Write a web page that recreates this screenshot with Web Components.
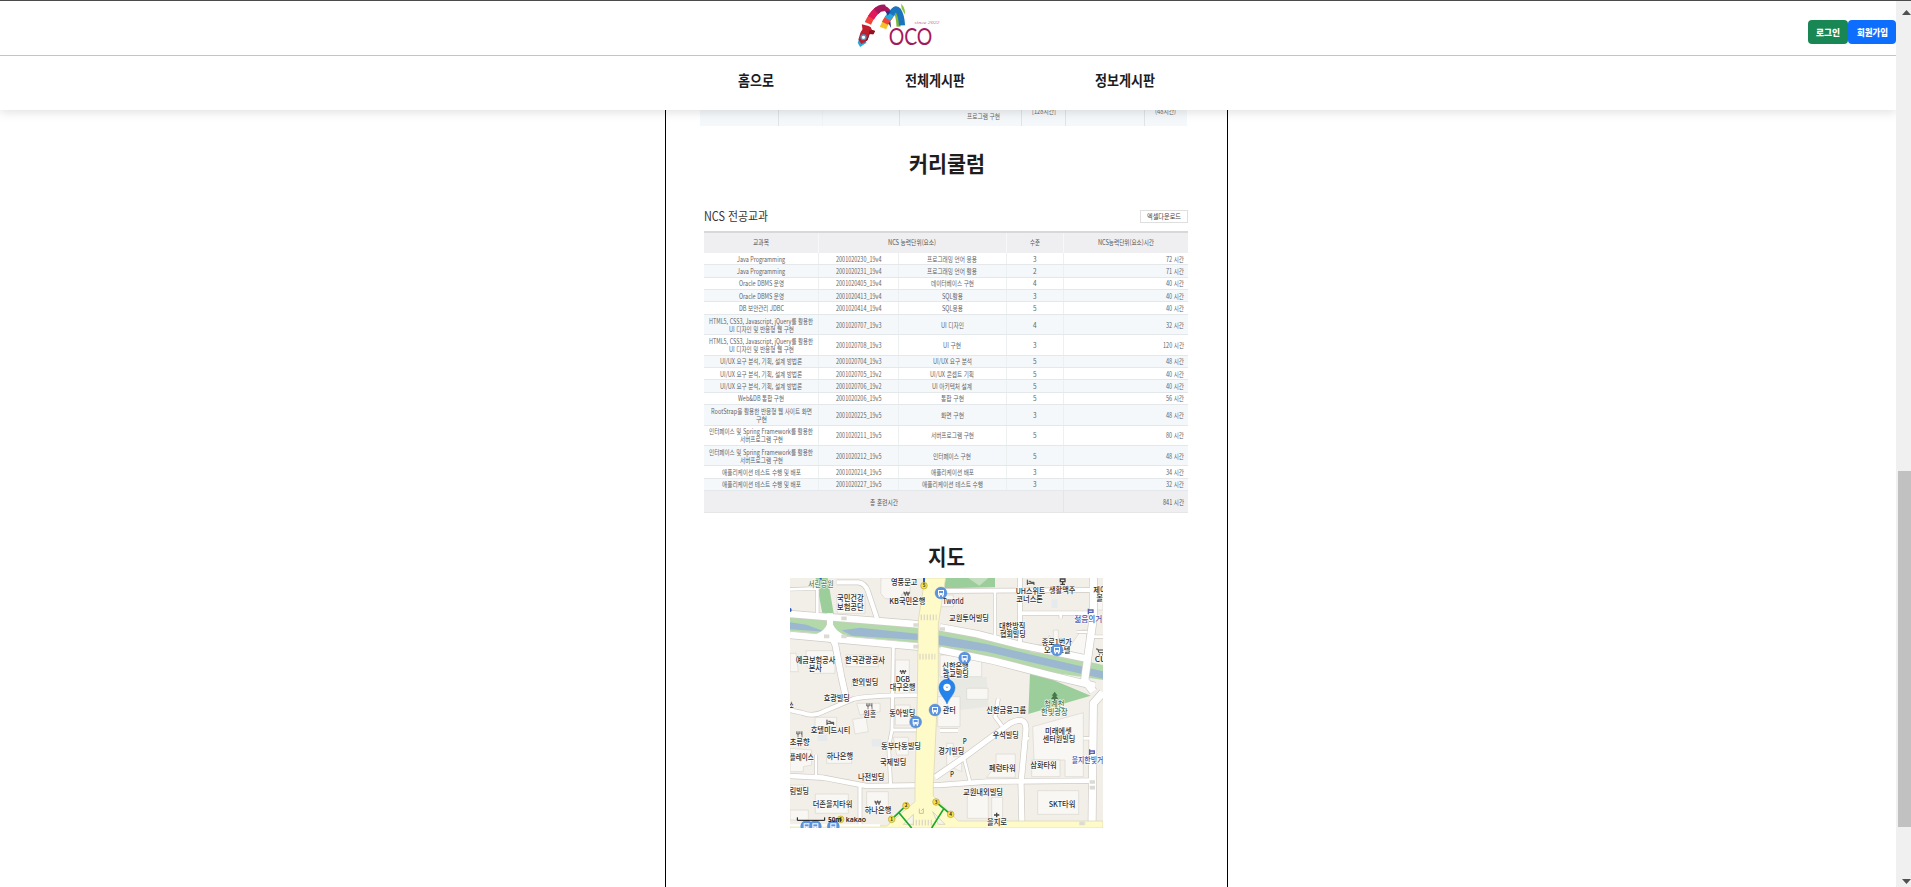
<!DOCTYPE html>
<html lang="ko">
<head>
<meta charset="utf-8">
<title>MOCO</title>
<style>
html,body{margin:0;height:100%;overflow:hidden;background:#fff;color:#222}
body{font-family:"Noto Sans CJK KR","Noto Sans",sans-serif}
</style>
</head>
<body>
<moco-app></moco-app>
<script>
/* Text squeezed or stretched to a set width; w = width, s = font size, h = line height */
class FitText extends HTMLElement{
  connectedCallback(){
    const w=+this.getAttribute('w'),s=+this.getAttribute('s'),h=+(this.getAttribute('h')||Math.ceil(s*1.2));
    const wt=this.getAttribute('wt')||400;
    this.attachShadow({mode:'open'}).innerHTML=`<style>:host{display:block;flex:none;width:${w}px;height:${h}px}svg{display:block;overflow:visible}</style>
    <svg width="${w}" height="${h}"><text x="0" y="${h/2+s*0.37}" font-size="${s}" font-weight="${wt}" fill="currentColor" textLength="${w}" lengthAdjust="spacingAndGlyphs"></text></svg>`;
    this.shadowRoot.querySelector('text').textContent=this.getAttribute('t');
  }
}
customElements.define('fit-text',FitText);

class MocoLogo extends HTMLElement{
  constructor(){super();this.attachShadow({mode:'open'}).innerHTML=`
<style>:host{display:block;width:88px;height:50px}svg{display:block}</style>
<svg width="88" height="50" viewBox="0 0 258 150" preserveAspectRatio="none">
<g fill="none" stroke-width="20">
<path d="M108 22Q120 42 122 80" stroke="#7db733" stroke-width="12"/>
<path d="M32 70Q44 43 60 30" stroke="#f0433a"/>
<path d="M41 53Q50 38 62 29" stroke="#e2185f"/>
<path d="M56 34Q68 22 82 24" stroke="#a3195b"/>
<path d="M74 23Q88 24 96 42" stroke="#a3195b" stroke-width="14"/>
<path d="M76 84Q84 62 100 44" stroke="#f5c22b"/>
<path d="M82 70Q88 58 98 46" stroke="#f0433a"/>
<path d="M89 57Q96 46 106 37" stroke="#27a8e0"/>
<path d="M100 43Q112 20 121 32Q130 46 132 76" stroke="#1c75bc" stroke-width="18"/>
</g>
<path d="M84 33l15 1-9 13zM92 70l8 14-2-20z" fill="#27358b"/>
<path d="M129 11Q142 22 141 44L131 26z" fill="#8cc63f"/>
<path d="M10 108L2 128 9 141 28 128z" fill="#27a8e0"/>
<path d="M14 73L34 78Q42 80 44 90L53 93 48 103 37 102 31 120 13 132 4 119 10 98 16 88z" fill="#be1e2d"/>
<path d="M44 90L53 93 48 103 37 102 31 120 17 131Q36 112 36 92z" fill="#8f1322"/>
<circle cx="19" cy="112" r="7" fill="#fff" stroke="#27a8e0" stroke-width="4"/>
<text x="93" y="136" font-family="Lato" font-size="69" fill="#a3195b" textLength="128" lengthAdjust="spacingAndGlyphs">OCO</text>
<text x="168" y="71" font-family="Liberation Serif" font-style="italic" font-size="15" fill="#bd6c94" textLength="74" lengthAdjust="spacingAndGlyphs">since 2022</text>
</svg>`}
}
customElements.define('moco-logo',MocoLogo);

class MocoButton extends HTMLElement{
  constructor(){super();this.attachShadow({mode:'open'}).innerHTML=`<style>:host{display:flex;align-items:center;justify-content:center;height:24px;border-radius:4px;color:#fff;background:var(--bg)}</style><slot></slot>`}
}
customElements.define('moco-button',MocoButton);

class MocoHeader extends HTMLElement{
  constructor(){super();this.attachShadow({mode:'open'}).innerHTML=`
<style>
:host{display:block;position:relative;z-index:2;background:#fff;box-shadow:0 2px 10px rgba(0,0,0,.13);height:110px;box-sizing:border-box;border-top:1px solid #4b4b4b}
.top{display:flex;height:54px;border-bottom:1px solid #c4c4c4;justify-content:space-between}
moco-logo{margin:-1px 0 0 857px}
.btns{display:flex;margin-top:19px}
.btns moco-button:first-child{width:40px;--bg:#198754}
.btns moco-button:last-child{width:48px;--bg:#0d6efd}
nav{display:flex;gap:130.5px;padding:14px 0 0 738px;color:#1d1d1f}
</style>
<div class="top"><moco-logo></moco-logo><div class="btns">
<moco-button><fit-text t="로그인" w="24" s="9.5" wt="900"></fit-text></moco-button><moco-button><fit-text t="회원가입" w="31" s="9.5" wt="900"></fit-text></moco-button></div></div>
<nav><fit-text t="홈으로" w="36" s="15" h="20" wt="700"></fit-text><fit-text t="전체게시판" w="60" s="15" h="20" wt="700"></fit-text><fit-text t="정보게시판" w="60" s="15" h="20" wt="700"></fit-text></nav>`}
}
customElements.define('moco-header',MocoHeader);

/* Last row of the training summary table, partly under the header */
class SummaryTail extends HTMLElement{
  constructor(){super();this.attachShadow({mode:'open'}).innerHTML=`
<style>
:host{display:grid;grid-template-columns:79px 44px 77px 122px 44px 79px 42px;width:487px;height:16px;background:#f4f8fb;color:#666;overflow:hidden}
div{border-right:1px solid #e1e4e7;box-sizing:border-box;height:16px;display:flex}
div:nth-child(3){border-color:#eff3f6}div:last-child{border:0}
</style><div></div><div></div><div></div>
<div style="padding:2px 0 0 67px"><fit-text t="프로그램 구현" w="33" s="6.8" h="9"></fit-text></div>
<div style="padding-left:10px"><fit-text t="[128시간]" w="24" s="7.2" h="3"></fit-text></div><div></div>
<div style="padding-left:10px"><fit-text t="(48시간)" w="21" s="7.2" h="3"></fit-text></div>`}
}
customElements.define('summary-tail',SummaryTail);

const ROWS=[
[12.4,[['Java Programming',48]],'2001020230_19v4',['프로그래밍 언어 응용',50],'3','72 시간'],
[12.4,[['Java Programming',48]],'2001020231_19v4',['프로그래밍 언어 활용',50],'2','71 시간'],
[12.4,[['Oracle DBMS 운영',45]],'2001020405_19v4',['데이터베이스 구현',43],'4','40 시간'],
[12.4,[['Oracle DBMS 운영',45]],'2001020413_19v4',['SQL활용',21],'3','40 시간'],
[12.4,[['DB 보안관리 JDBC',45]],'2001020414_19v4',['SQL응용',21],'5','40 시간'],
[20.4,[['HTML5, CSS3, Javascript, jQuery를 활용한',104],['UI 디자인 및 반응형 웹 구현',65]],'2001020707_19v3',['UI 디자인',23],'4','32 시간'],
[20.4,[['HTML5, CSS3, Javascript, jQuery를 활용한',104],['UI 디자인 및 반응형 웹 구현',65]],'2001020708_19v3',['UI 구현',18],'3','120 시간'],
[12.4,[['UI/UX 요구 분석, 기획, 설계 방법론',82]],'2001020704_19v3',['UI/UX 요구 분석',39],'5','48 시간'],
[12.4,[['UI/UX 요구 분석, 기획, 설계 방법론',82]],'2001020705_19v2',['UI/UX 콘셉트 기획',44],'5','40 시간'],
[12.4,[['UI/UX 요구 분석, 기획, 설계 방법론',82]],'2001020706_19v2',['UI 아키텍처 설계',40],'5','40 시간'],
[12.4,[['Web&DB 통합 구현',46]],'2001020206_19v5',['통합 구현',23],'5','56 시간'],
[20.4,[['RootStrap을 활용한 반응형 웹 사이트 화면',101],['구현',11]],'2001020225_19v5',['화면 구현',23],'3','48 시간'],
[20.4,[['인터페이스 및 Spring Framework를 활용한',104],['서버프로그램 구현',43]],'2001020211_19v5',['서버프로그램 구현',43],'5','80 시간'],
[20.4,[['인터페이스 및 Spring Framework를 활용한',104],['서버프로그램 구현',43]],'2001020212_19v5',['인터페이스 구현',38],'5','48 시간'],
[12.4,[['애플리케이션 테스트 수행 및 배포',79]],'2001020214_19v5',['애플리케이션 배포',43],'3','34 시간'],
[12.4,[['애플리케이션 테스트 수행 및 배포',79]],'2001020227_19v5',['애플리케이션 테스트 수행',61],'3','32 시간']];
class CurriculumTable extends HTMLElement{
  constructor(){super();
    const f=(t,w,s=7.2)=>`<fit-text t="${t.replace('&','&amp;')}" w="${w}" s="${s}" h="8"></fit-text>`;
    const hw=t=>t.length>5?21:18;
    this.attachShadow({mode:'open'}).innerHTML=`
<style>
:host{display:block;width:484px;color:#626466}
.bar{display:flex;justify-content:space-between;align-items:center;height:14px;margin-bottom:7.5px;color:#333}
.dl{display:flex;align-items:center;justify-content:center;width:48px;height:13px;box-sizing:border-box;border:1px solid #dfdfdf;color:#444}
.r{display:grid;grid-template-columns:115.3px 80px 108px 57.4px 1fr;box-sizing:border-box;border-bottom:1px solid #e4e8ea}
.r>div{display:flex;flex-direction:column;align-items:center;justify-content:center;border-right:1px solid #edf0f1}
.r>div:first-child{padding-left:1px}
.r>div:last-child{border:0;align-items:flex-end;padding-right:4px}
.r.h{height:22.4px;background:#efeff1;border-top:2px solid #d7d8d9;border-bottom:0;color:#555}
.r.h>div{border-color:#f7f7f8;padding-bottom:2px}
.r.h>div:last-child{align-items:center;padding:0 0 2px 1px}
.r.f{height:22px;background:#efeff1;border-bottom:1px solid #e6e6e8;color:#555}
.r.f>div{border-color:#e5e5e8}
</style>
<div class="bar"><fit-text t="NCS 전공교과" w="64" s="12.5" h="14"></fit-text><div class="dl">${f('엑셀다운로드',34)}</div></div>
<section><div class="r h"><div>${f('교과목',16)}</div><div style="grid-column:span 2">${f('NCS 능력단위(요소)',48)}</div><div>${f('수준',10)}</div><div>${f('NCS능력단위(요소)시간',56)}</div></div>
${ROWS.map((r,i)=>`<div class="r" style="height:${r[0]}px;background:${i%2?'#f4f8fb':'#fff'}"><div>${r[1].map(x=>f(...x)).join('')}</div><div>${f(r[2],45.5)}</div><div>${f(...r[3])}</div><div>${f(r[4],3.6)}</div><div>${f(r[5],hw(r[5]))}</div></div>`).join('')}
<div class="r f"><div style="grid-column:span 4">${f('총 훈련시간',28)}</div><div>${f('841 시간',21)}</div></div></section>`;
  }
}
customElements.define('curriculum-table',CurriculumTable);

/* Map; drawn in thirds of a pixel */
class KakaoMap extends HTMLElement{
  constructor(){super();
  const roads=[
  [8,'M30 178L112 175V250'],[13,'M170 157H235Q256 160 264 184L292 268'],[9,'M340 350L336 600M336 600H415M336 600L326 650L332 765'],
  [12,'M25 540L65 548Q100 562 130 545L220 507Q270 495 415 496'],[18,'M150 250V310L166 345L184 440L198 502'],
  [14,'M30 738L130 743L260 768L480 765L620 755L930 752'],[10,'M240 768V894'],[7,'M108 675V742'],
  [16,'M465 742L555 680L690 580Q738 556 738 598L723 760L726 894'],[10,'M655 505L645 560L666 588'],[8,'M552 685L570 755'],
  [10,'M480 602H534'],[12,'M480 183L930 180'],[8,'M645 183V325'],[12,'M720 144V345M720 250H930'],[8,'M842 250V265M890 306H922M936 320H969M735 625H748M910 625H935'],
  [20,'M30 252L415 283M480 292L590 312L720 345L915 385M30 315L415 350M480 360L640 392L810 436L945 468'],
  [22,'M940 144V262L914 450L940 485M969 487L940 520L936 894']];
  const bl=['M303 144H390V192H365V206H315L302 190Z','M30 370H48L55 425H30Z','M78 362H165V430H100L78 405Z','M170 196H255V250H172Z','M198 375H295V410H198Z','M218 446L290 448 292 468 215 470Z','M346 390H388V500H346Z','M346 525H390V585H346Z','M230 520H300V545L240 555Z','M218 568L258 562 265 605 225 612Z','M105 562H170V590H105Z','M30 655L95 660V705L70 710V725H30Z','M140 668H215V700H140Z','M340 622H385V675H350Z','M260 785H325V845H260Z','M30 765H70V795H30ZM106 792H205V850H106ZM30 840H85V870H30Z','M480 375H605V440H480Z','M473 500H540V590H473Z','M560 475H624V508H560Z','M500 640H520V680H545V725L500 705Z','M648 672H706V742H620L648 706Z','M758 590L910 548V740H855V690H762Z','M755 690H840V740H755Z','M773 782H896V853H773Z','M562 795H625V865H562ZM635 802H668V865H635Z','M752 348L800 340 808 315 820 340V300H835V345L860 350 865 380 752 365Z','M905 300H920V375L860 362Z','M480 195H520V230H480Z','M942 180H969V240H942Z'];
  const L=[['서린공원',84,162,77,'#5b7f5b'],['국민건강',171,206,80],['보험공단',171,232,80],['영풍문고',333,156,79],['KB국민은행',328,214,108],['예금보험공사',47,390,119],['본사',86,414,40],['한국관광공사',195,390,120],['DGB',347,447,43],['대구은행',329,472,77],['한외빌딩',216,457,79],['효광빌딩',131,505,78],['원흥',250,553,39],['동아빌딩',328,551,78],['호텔미드시티',92,602,119],['초류향',29,638,60],['플레이스',29,683,72],['하나은행',140,679,79],['동부다동빌딩',303,649,120],['국제빌딩',300,697,79],['나전빌딩',234,742,79],['림빌딩',29,784,58],['더존을지타워',98,822,119],['하나은행',254,841,80],
  ['Tworld',488,213,63],['교원투어빌딩',507,265,120],['대한방직',657,288,79],['협회빌딩',660,312,77],['UH스위트',707,183,89],['생활맥주',807,181,79],['코너스톤',709,207,80],['제이',940,180,40],['볼',949,204,20],['젊음의거',883,268,84,'#4a50a5'],['종로1번가',785,337,90],['오피스텔',792,361,79],['CU',944,389,34],['신한은행',487,409,79],['광교빌딩',488,434,78],
  ['관터',488,541,39],['신한금융그룹',619,542,119],['우석빌딩',638,617,78],['경기빌딩',475,665,78],['페럼타워',627,716,80],['삼화타워',751,707,79],['교원내외빌딩',549,787,120],['을지로',621,877,60],['미래에셋',795,603,80],['센터원빌딩',788,627,98],['SKT타워',806,822,80],['청계천',793,523,60,'#49774c'],['한빛광장',783,547,80,'#49774c'],['을지한빛거',875,691,95,'#4a50a5'],['P',548,634,12],['P',510,734,12],['소',28,527,13]];
  const bus=(x,y)=>`<g transform="translate(${x} ${y})"><circle r="18" fill="#5d93dd" stroke="#3f7fce" stroke-width="1"/><path d="M-9-9H9V7H-9ZM-7 7h4v4h-4zM3 7h4v4h-4z" fill="#fff"/><path d="M-6-6H6V0H-6Z" fill="#5d93dd"/><path d="M-6 3h3M3 3h3" stroke="#5d93dd" stroke-width="2"/></g>`;
  const ex=(x,y,n)=>`<circle cx="${x}" cy="${y}" r="10" fill="#f7e04a" stroke="#a18e24" stroke-width="1.5"/><text x="${x-4}" y="${y+5}" font-size="14" font-weight="700">${n}</text>`;
  const fork=(x,y)=>`<path transform="translate(${x} ${y})" d="M-8-8V0M-4-8V0M0-8V0M-8 0H0M-4 0V10M8-8V10M5-8V0H8" stroke="#444" stroke-width="2" fill="none"/>`;
  const bed=(x,y)=>`<path transform="translate(${x} ${y})" d="M-10-8V8M-10 3H10V8M-6-3H0V0H10V3" stroke="#444" stroke-width="3" fill="none"/>`;
  const won=(x,y)=>`<path transform="translate(${x} ${y})" d="M-8-6L-4 6 0-6 4 6 8-6M-10-2H10" stroke="#444" stroke-width="2.5" fill="none"/>`;
  this.attachShadow({mode:'open'}).innerHTML=`
<style>:host{display:block;width:313px;height:250px}svg{display:block}</style>
<svg width="313" height="250" viewBox="30 144 939 750" fill="none">
<rect x="30" y="144" width="939" height="750" fill="#f2efe9"/>
<path d="M480 440L620 440 625 530 540 540 480 500Z" fill="#e9e9e4"/>
<g fill="#9bce9a"><path d="M107 144H143L162 256H128Z"/><path d="M497 144H645V172L493 175Z"/><path d="M750 430L745 552L932 497L800 442Z"/></g>
<path d="M565 144H625L598 167Z" fill="#c4dfbf"/>
<path d="M30 262L415 292V338L30 303Z" fill="#b3d9ab"/><path d="M30 277L80 284 135 305 30 298ZM185 301L240 293 415 311V330L215 317Z" fill="#9cb8d1"/>
<path d="M475 300L620 328 800 367 969 405V450L800 425 620 380 475 352Z" fill="#b3d9ab"/><path d="M475 316L620 342 800 385 969 424V446L800 408 620 365 475 344Z" fill="#9cb8d1"/>
<g fill="#f9f7f3" stroke="#d9d6d0" stroke-width="2">${bl.map(d=>`<path d="${d}"/>`).join('')}</g>
<g fill="#e7eaec"><path d="M112 610h30v23h-30zM275 627h30v23h-30zM815 208h18v26h-18z"/></g>
<g stroke="#cfcbc5" stroke-linejoin="round">${roads.map(r=>`<path d="${r[1]}" stroke-width="${r[0]+4}"/>`).join('')}</g>
<g stroke="#fff" stroke-linejoin="round">${roads.map(r=>`<path d="${r[1]}" stroke-width="${r[0]}"/>`).join('')}</g>
<path d="M110 312Q135 300 140 285H160Q165 300 190 314V322H110Z" fill="#fff"/>
<path d="M30 888H320L405 815V765L412 500 415 270 435 144H497L475 280 475 450 460 765V798L535 873H969V894H30Z" fill="#fffbc8" stroke="#d8d3ab" stroke-width="2"/>
<path d="M30 886H300" stroke="#fff" stroke-width="7"/>
<path d="M422 262h48M418 380h48M398 878h62" stroke="#ddd9c4" stroke-width="17" stroke-dasharray="4 5"/>
<path d="M184 265h16M400 285h16M479 297h16M400 350h16M132 319h16M184 319h16M929 756h16M929 773h16M898 880h20" stroke="#dcdad5" stroke-width="11" stroke-dasharray="16 3"/>
<path d="M370 883L400 853V883ZM458 845L495 883H475Z" fill="#f7f5ee" stroke="#c9c5b5" stroke-width="2"/>
<path d="M418 836v14h12v-14l-6 6M430 836" stroke="#c5c1a6" stroke-width="3"/>
<path d="M432 144V160M122 144V152M505 436V450" stroke="#2459c4" stroke-width="6"/><circle cx="29" cy="240" r="6" fill="#2459c4"/>
<path d="M335 868L378 827M357 848L395 894M468 816L512 853M490 838L455 894" stroke="#17a82c" stroke-width="5"/>
<g fill="#2b2b2b" stroke="#fff" stroke-width="3" stroke-linejoin="round" paint-order="stroke" font-weight="500" font-size="23">${L.map(l=>`<text x="${l[1]}" y="${l[2]+8}" textLength="${l[3]}" lengthAdjust="spacingAndGlyphs"${l[4]?` fill="${l[4]}"`:''}>${l[0]}</text>`).join('')}</g>
${fork(268,528)}${fork(58,612)}${bed(151,577)}${bed(752,157)}${won(380,191)}${won(369,426)}${won(293,818)}
<path d="M841 147h14v8h-14zM848 155v8M841 163h14M650 848v14M642 855h16" stroke="#444" stroke-width="4"/>
<path d="M824 485L815 497h5l-7 10h9v6h4v-6h9l-7-10h5Z" fill="#49774c"/>
<path d="M925 236V253M925 240H939V247H925M929 658V675M929 663H943V670H929" stroke="#5961b5" stroke-width="4"/>
<path d="M948 357h5l4 11h13l2-8H954M958 373v3M968 373v3" stroke="#444" stroke-width="3"/>
<g fill="#333">${ex(432,167,5)}${ex(378,827,2)}${ex(335,868,1)}${ex(468,816,3)}${ex(512,853,4)}${ex(182,868,6)}</g>
${bus(483,189)}${bus(554,384)}${bus(831,360)}${bus(407,576)}${bus(465,540)}${bus(80,889)}${bus(106,889)}${bus(160,889)}
<path d="M501 522C493 502 477 492 477 472A24 24 0 0 1 525 472C525 492 509 502 501 522Z" fill="#2583ec" stroke="#1b6fd0" stroke-width="1.5"/><circle cx="501" cy="472" r="11" fill="#fff"/><path d="M496 470h10l-5 5z" fill="#6da9ec"/>
<path d="M52 862V871H134V862" stroke="#111" stroke-width="3"/>
<g fill="#111" font-weight="700"><text x="144" y="876" font-size="19" textLength="40" lengthAdjust="spacingAndGlyphs">50m</text><text x="197" y="877" font-family="Open Sans" font-weight="600" font-size="23" textLength="61" lengthAdjust="spacingAndGlyphs">kakao</text></g>
</svg>`}
}
customElements.define('kakao-map',KakaoMap);

class ContentPanel extends HTMLElement{
  constructor(){super();this.attachShadow({mode:'open'}).innerHTML=`
<style>:host{display:block;box-sizing:border-box;width:563px;margin-left:665px;border:solid #000;border-width:0 1px;height:777px}
h2{margin:0;display:flex;justify-content:center;color:#1e1e20}
summary-tail{margin-left:33.5px}
.c{margin-top:25px}curriculum-table{margin:32px 0 0 37.5px}
.m{margin-top:31px}kakao-map{margin:8px 0 0 124px}</style>
<summary-tail></summary-tail>
<h2 class="c"><fit-text t="커리쿨럼" w="76" s="21.5" h="26" wt="700"></fit-text></h2>
<curriculum-table></curriculum-table>
<h2 class="m"><fit-text t="지도" w="37" s="21.5" h="26" wt="700"></fit-text></h2>
<kakao-map></kakao-map>`}
}
customElements.define('content-panel',ContentPanel);

class ScrollRail extends HTMLElement{
  constructor(){super();this.attachShadow({mode:'open'}).innerHTML=`
<style>:host{display:flex;flex-direction:column;width:15px;height:887px;background:#f0f0f0;box-sizing:border-box;border-top:1px solid #4b4b4b}
svg{display:block;flex:none}i{display:block;height:356px;margin:453px 0 auto 2px;background:#c1c1c1}</style>
<svg width="15" height="17"><path d="M6 14L10.5 9 15 14Z" fill="#505050"/></svg><i></i><svg width="15" height="17"><path d="M6 9L10.5 14 15 9Z" fill="#505050"/></svg>`}
}
customElements.define('scroll-rail',ScrollRail);

class MocoApp extends HTMLElement{
  constructor(){super();this.attachShadow({mode:'open'}).innerHTML=`
<style>:host{display:grid;grid-template-columns:1896px 15px;height:887px;overflow:hidden}main{overflow:hidden}</style>
<main><moco-header></moco-header><content-panel></content-panel></main><scroll-rail></scroll-rail>`}
}
customElements.define('moco-app',MocoApp);
</script>
</body>
</html>
